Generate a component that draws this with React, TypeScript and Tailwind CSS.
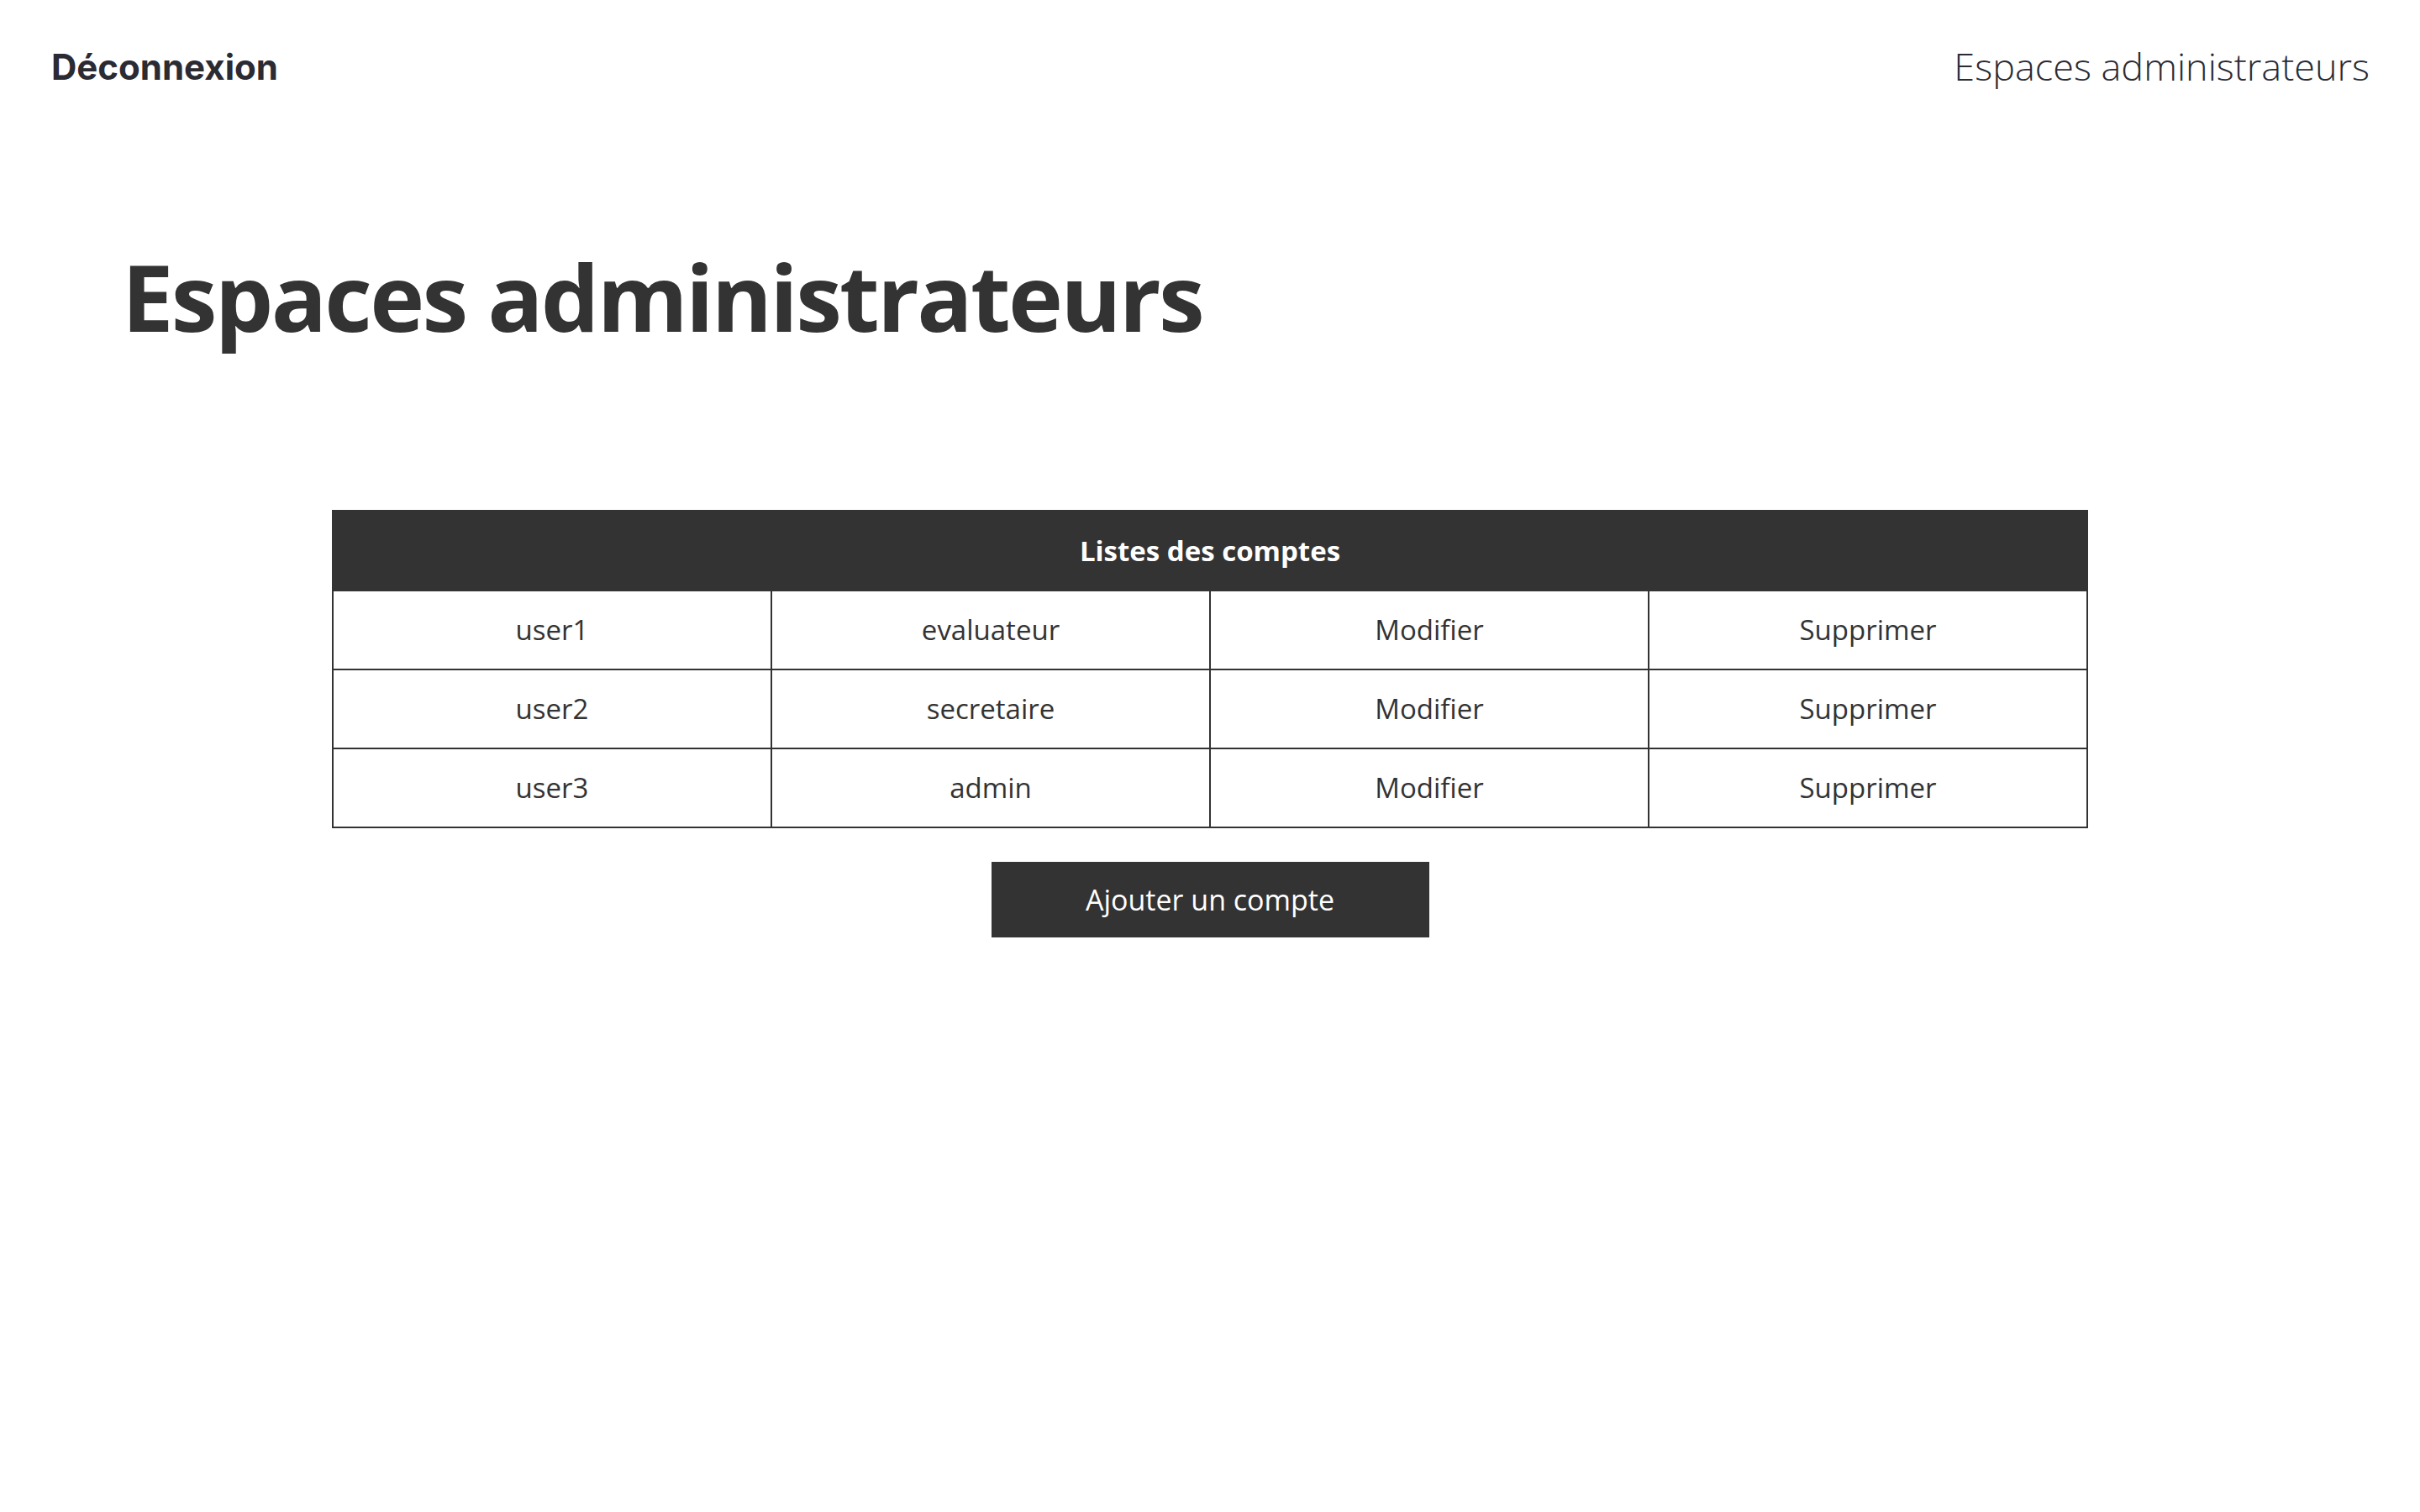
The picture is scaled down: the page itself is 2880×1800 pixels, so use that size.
const accounts = [
  { name: "user1", role: "evaluateur" },
  { name: "user2", role: "secretaire" },
  { name: "user3", role: "admin" },
];

export default function App() {
  return (
    <div className="min-h-screen bg-white text-[#333333] font-['Open_Sans',sans-serif]">
      <header className="flex items-center justify-between h-[158px] pl-[61px] pr-[60px]">
        <a href="#" className="font-['Inter',sans-serif] font-bold text-[42px] text-[#2b2b33]">
          Déconnexion
        </a>
        <span className="text-[45px] font-light text-[#2b2b33]">Espaces administrateurs</span>
      </header>

      <main>
        <h1 className="pl-[145px] mt-[139px] text-[110px] font-bold leading-none tracking-tight">
          Espaces administrateurs
        </h1>

        <table className="mt-[200px] mx-auto w-[2090px] border-collapse table-fixed text-[33px]">
          <thead>
            <tr>
              <th
                colSpan={4}
                className="h-[95px] bg-[#333333] text-white text-[33px] font-bold border-2 border-[#333333]"
              >
                Listes des comptes
              </th>
            </tr>
          </thead>
          <tbody>
            {accounts.map((a) => (
              <tr key={a.name} className="h-[94px]">
                <td className="border-2 border-[#333333] text-center">{a.name}</td>
                <td className="border-2 border-[#333333] text-center">{a.role}</td>
                <td className="border-2 border-[#333333] text-center">Modifier</td>
                <td className="border-2 border-[#333333] text-center">Supprimer</td>
              </tr>
            ))}
          </tbody>
        </table>

        <div className="flex justify-center mt-[40px]">
          <button className="w-[521px] h-[90px] bg-[#333333] text-white text-[34px]">
            Ajouter un compte
          </button>
        </div>
      </main>
    </div>
  );
}
